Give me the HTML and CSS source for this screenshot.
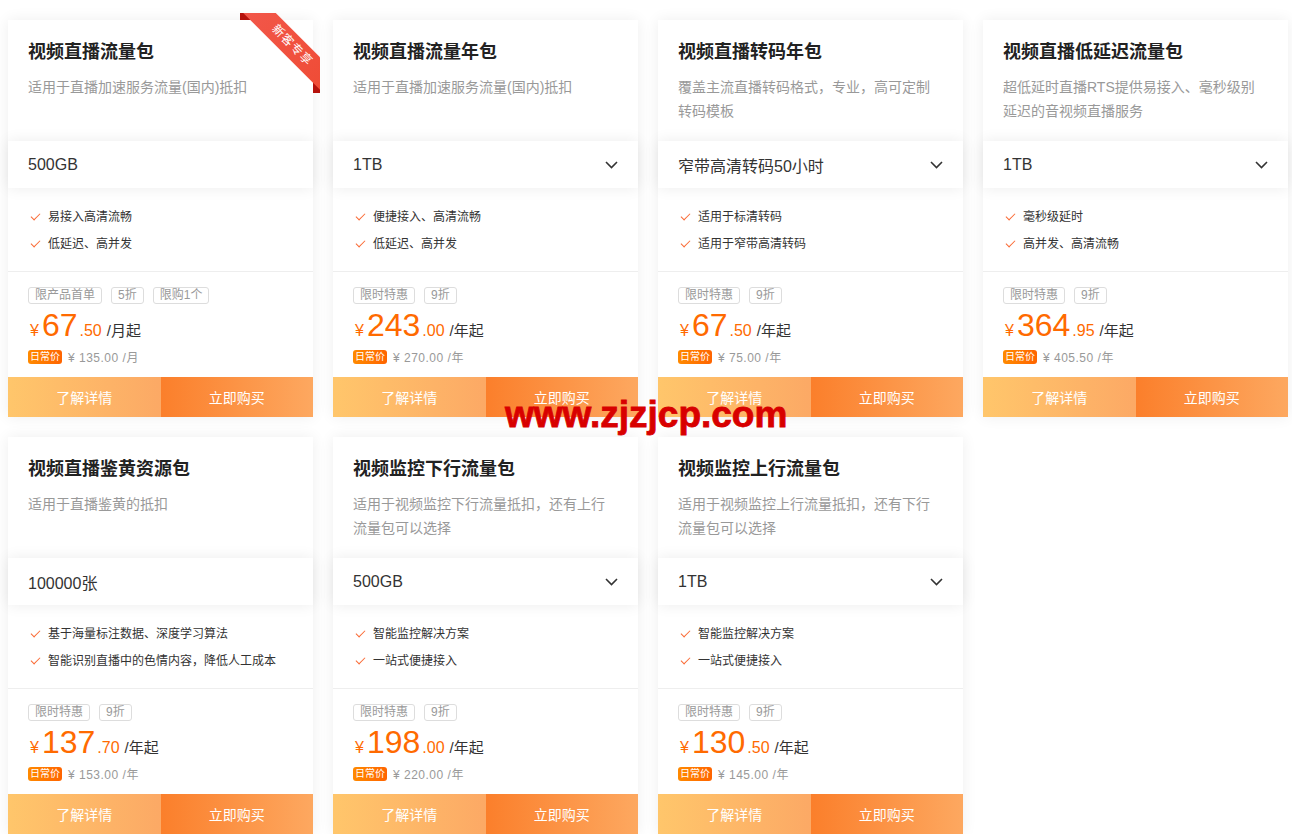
FILE: index.html
```html
<!DOCTYPE html>
<html lang="zh-CN">
<head>
    <meta charset="UTF-8">
    <meta name="viewport" content="width=device-width, initial-scale=1.0">
    <title>视频直播资源包</title>
    <link rel="stylesheet" href="styles.css">
</head>
<body>
    <div class="plans">
        <!-- 视频直播流量包 -->
        <div class="card">
            <div class="ribbon"><span>新客专享</span></div>
            <div class="card-head">
                <h3>视频直播流量包</h3>
                <p>适用于直播加速服务流量(国内)抵扣</p>
            </div>
            <div class="spec">500GB</div>
            <ul class="features">
                <li>易接入高清流畅</li>
                <li>低延迟、高并发</li>
            </ul>
            <div class="price-box">
                <div class="tags"><span>限产品首单</span><span>5折</span><span>限购1个</span></div>
                <div class="price"><em>¥</em><strong>67</strong><small>.50</small><i>/月起</i></div>
                <div class="daily"><b>日常价</b>¥ 135.00 /月</div>
            </div>
            <div class="actions"><a class="detail">了解详情</a><a class="buy">立即购买</a></div>
        </div>

        <!-- 视频直播流量年包 -->
        <div class="card">
            <div class="card-head">
                <h3>视频直播流量年包</h3>
                <p>适用于直播加速服务流量(国内)抵扣</p>
            </div>
            <div class="spec">1TB <svg width="13" height="8" viewBox="0 0 13 8"><polyline points="1,1 6.5,6.5 12,1"/></svg></div>
            <ul class="features">
                <li>便捷接入、高清流畅</li>
                <li>低延迟、高并发</li>
            </ul>
            <div class="price-box">
                <div class="tags"><span>限时特惠</span><span>9折</span></div>
                <div class="price"><em>¥</em><strong>243</strong><small>.00</small><i>/年起</i></div>
                <div class="daily"><b>日常价</b>¥ 270.00 /年</div>
            </div>
            <div class="actions"><a class="detail">了解详情</a><a class="buy">立即购买</a></div>
        </div>

        <!-- 视频直播转码年包 -->
        <div class="card">
            <div class="card-head">
                <h3>视频直播转码年包</h3>
                <p>覆盖主流直播转码格式，专业，高可定制转码模板</p>
            </div>
            <div class="spec">窄带高清转码50小时 <svg width="13" height="8" viewBox="0 0 13 8"><polyline points="1,1 6.5,6.5 12,1"/></svg></div>
            <ul class="features">
                <li>适用于标清转码</li>
                <li>适用于窄带高清转码</li>
            </ul>
            <div class="price-box">
                <div class="tags"><span>限时特惠</span><span>9折</span></div>
                <div class="price"><em>¥</em><strong>67</strong><small>.50</small><i>/年起</i></div>
                <div class="daily"><b>日常价</b>¥ 75.00 /年</div>
            </div>
            <div class="actions"><a class="detail">了解详情</a><a class="buy">立即购买</a></div>
        </div>

        <!-- 视频直播低延迟流量包 -->
        <div class="card">
            <div class="card-head">
                <h3>视频直播低延迟流量包</h3>
                <p>超低延时直播RTS提供易接入、毫秒级别延迟的音视频直播服务</p>
            </div>
            <div class="spec">1TB <svg width="13" height="8" viewBox="0 0 13 8"><polyline points="1,1 6.5,6.5 12,1"/></svg></div>
            <ul class="features">
                <li>毫秒级延时</li>
                <li>高并发、高清流畅</li>
            </ul>
            <div class="price-box">
                <div class="tags"><span>限时特惠</span><span>9折</span></div>
                <div class="price"><em>¥</em><strong>364</strong><small>.95</small><i>/年起</i></div>
                <div class="daily"><b>日常价</b>¥ 405.50 /年</div>
            </div>
            <div class="actions"><a class="detail">了解详情</a><a class="buy">立即购买</a></div>
        </div>

        <!-- 视频直播鉴黄资源包 -->
        <div class="card">
            <div class="card-head">
                <h3>视频直播鉴黄资源包</h3>
                <p>适用于直播鉴黄的抵扣</p>
            </div>
            <div class="spec">100000张</div>
            <ul class="features">
                <li>基于海量标注数据、深度学习算法</li>
                <li>智能识别直播中的色情内容，降低人工成本</li>
            </ul>
            <div class="price-box">
                <div class="tags"><span>限时特惠</span><span>9折</span></div>
                <div class="price"><em>¥</em><strong>137</strong><small>.70</small><i>/年起</i></div>
                <div class="daily"><b>日常价</b>¥ 153.00 /年</div>
            </div>
            <div class="actions"><a class="detail">了解详情</a><a class="buy">立即购买</a></div>
        </div>

        <!-- 视频监控下行流量包 -->
        <div class="card">
            <div class="card-head">
                <h3>视频监控下行流量包</h3>
                <p>适用于视频监控下行流量抵扣，还有上行流量包可以选择</p>
            </div>
            <div class="spec">500GB <svg width="13" height="8" viewBox="0 0 13 8"><polyline points="1,1 6.5,6.5 12,1"/></svg></div>
            <ul class="features">
                <li>智能监控解决方案</li>
                <li>一站式便捷接入</li>
            </ul>
            <div class="price-box">
                <div class="tags"><span>限时特惠</span><span>9折</span></div>
                <div class="price"><em>¥</em><strong>198</strong><small>.00</small><i>/年起</i></div>
                <div class="daily"><b>日常价</b>¥ 220.00 /年</div>
            </div>
            <div class="actions"><a class="detail">了解详情</a><a class="buy">立即购买</a></div>
        </div>

        <!-- 视频监控上行流量包 -->
        <div class="card">
            <div class="card-head">
                <h3>视频监控上行流量包</h3>
                <p>适用于视频监控上行流量抵扣，还有下行流量包可以选择</p>
            </div>
            <div class="spec">1TB <svg width="13" height="8" viewBox="0 0 13 8"><polyline points="1,1 6.5,6.5 12,1"/></svg></div>
            <ul class="features">
                <li>智能监控解决方案</li>
                <li>一站式便捷接入</li>
            </ul>
            <div class="price-box">
                <div class="tags"><span>限时特惠</span><span>9折</span></div>
                <div class="price"><em>¥</em><strong>130</strong><small>.50</small><i>/年起</i></div>
                <div class="daily"><b>日常价</b>¥ 145.00 /年</div>
            </div>
            <div class="actions"><a class="detail">了解详情</a><a class="buy">立即购买</a></div>
        </div>
    </div>

    <div class="watermark">www.zjzjcp.com</div>
</body>
</html>
```

FILE: styles.css
```css
body {
    margin: 0;
    background: #fff;
    font-family: "Liberation Sans", "Noto Sans CJK SC", sans-serif;
    color: #333;
    position: relative;
}
.plans {
    display: grid;
    grid-template-columns: repeat(4, 305px);
    gap: 20px;
    padding: 20px 0 0 8px;
}
.card {
    position: relative;
    background: #fff;
    box-shadow: 0 0 14px rgba(0, 0, 0, 0.07);
    display: flex;
    flex-direction: column;
}
.card-head {
    height: 121px;
    box-sizing: border-box;
    padding: 20px 20px 0;
}
.card-head h3 {
    margin: 0;
    font-size: 18px;
    line-height: 24px;
    font-weight: bold;
    color: #222;
}
.card-head p {
    margin: 11px 0 0;
    font-size: 14px;
    line-height: 24px;
    color: #999;
}
.spec {
    position: relative;
    z-index: 1;
    height: 47px;
    padding: 0 20px;
    display: flex;
    align-items: center;
    justify-content: space-between;
    font-size: 16px;
    color: #333;
    background: #fff;
    box-shadow: 0 0 14px rgba(0, 0, 0, 0.08);
}
.spec svg polyline {
    fill: none;
    stroke: #333;
    stroke-width: 1.6;
}
.features {
    list-style: none;
    margin: 0;
    height: 84px;
    box-sizing: border-box;
    padding: 11px 20px 0;
    border-bottom: 1px solid #eee;
}
.features li {
    position: relative;
    padding-left: 20px;
    font-size: 12px;
    line-height: 18px;
    margin-top: 9px;
    color: #333;
}
.features li::before {
    content: "";
    position: absolute;
    left: 3px;
    top: 5px;
    width: 8px;
    height: 4px;
    border-left: 1.5px solid #fa6a35;
    border-bottom: 1.5px solid #fa6a35;
    transform: rotate(-45deg);
}
.price-box {
    height: 105px;
    box-sizing: border-box;
    padding: 15px 20px 0;
}
.tags {
    display: flex;
    gap: 9px;
}
.tags span {
    font-size: 12px;
    line-height: 15px;
    padding: 0 6px;
    color: #999;
    border: 1px solid #ddd;
    border-radius: 3px;
}
.price {
    display: flex;
    align-items: baseline;
    height: 38px;
    margin-top: 2px;
    color: #ff6a00;
}
.price em {
    font-style: normal;
    font-size: 16px;
    margin: 0 3px 0 2px;
}
.price strong {
    font-weight: normal;
    font-size: 32px;
    line-height: 38px;
}
.price small {
    font-size: 16px;
    margin-left: 2px;
}
.price i {
    font-style: normal;
    font-size: 15px;
    color: #333;
    margin-left: 5px;
}
.daily {
    display: flex;
    align-items: center;
    gap: 6px;
    margin-top: 4px;
    font-size: 12px;
    color: #999;
    letter-spacing: 0.5px;
}
.daily b {
    font-weight: normal;
    font-size: 10px;
    line-height: 14px;
    padding: 0 2px;
    color: #fff;
    letter-spacing: 0;
    border-radius: 3px;
    background: linear-gradient(90deg, #ff8a00, #ff6400);
}
.actions {
    display: flex;
    height: 40px;
}
.actions a {
    flex: 1;
    display: flex;
    align-items: center;
    justify-content: center;
    color: #fff;
    font-size: 14px;
    cursor: pointer;
}
.actions .detail {
    background: linear-gradient(90deg, #ffc66b, #fca965);
}
.actions .buy {
    background: linear-gradient(90deg, #fb7f2b, #fda860);
}
/* corner ribbon */
.ribbon {
    position: absolute;
    top: -7px;
    right: -7px;
    width: 80px;
    height: 80px;
    overflow: hidden;
    z-index: 2;
}
.ribbon::before,
.ribbon::after {
    content: "";
    position: absolute;
    background: #b5120c;
}
.ribbon::before {
    left: 0;
    top: 0;
    width: 12px;
    height: 7px;
}
.ribbon::after {
    right: 0;
    bottom: 0;
    width: 7px;
    height: 14px;
}
.ribbon span {
    position: absolute;
    z-index: 1;
    left: -8px;
    top: 21px;
    width: 120px;
    height: 23px;
    line-height: 23px;
    text-align: center;
    font-size: 12px;
    color: #fff;
    letter-spacing: 1px;
    background: linear-gradient(90deg, #f2574a, #ef4b34);
    transform: rotate(45deg);
}
.watermark {
    position: absolute;
    left: 505px;
    top: 394px;
    font-family: "Liberation Sans", sans-serif;
    font-size: 37px;
    font-weight: bold;
    color: #d80000;
    -webkit-text-stroke: 0.8px #d80000;
}
```
